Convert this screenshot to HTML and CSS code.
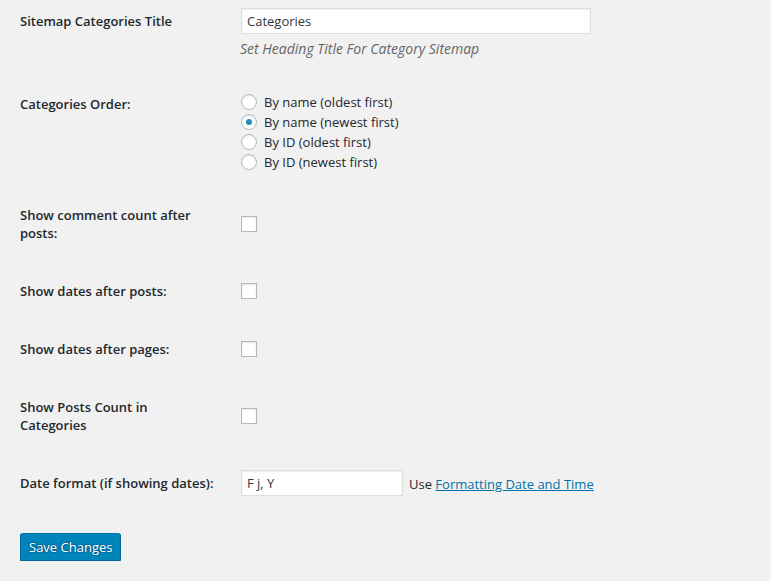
FILE: index.html
```html
<!DOCTYPE html>
<html>
<head>
<meta charset="utf-8">
<link rel="stylesheet" href="styles.css">
</head>
<body>
<div class="wrap">
  <table class="form-table">
    <tr class="row-first">
      <th>Sitemap Categories Title</th>
      <td>
        <input type="text" class="text-wide" value="Categories">
        <p class="description">Set Heading Title For Category Sitemap</p>
      </td>
    </tr>
    <tr class="row-radios">
      <th>Categories Order:</th>
      <td>
        <label class="radio-line"><input type="radio" name="order"> By name (oldest first)</label>
        <label class="radio-line"><input type="radio" name="order" checked> By name (newest first)</label>
        <label class="radio-line"><input type="radio" name="order"> By ID (oldest first)</label>
        <label class="radio-line"><input type="radio" name="order"> By ID (newest first)</label>
      </td>
    </tr>
    <tr>
      <th>Show comment count after<br>posts:</th>
      <td><input type="checkbox"></td>
    </tr>
    <tr>
      <th>Show dates after posts:</th>
      <td><input type="checkbox"></td>
    </tr>
    <tr>
      <th>Show dates after pages:</th>
      <td><input type="checkbox"></td>
    </tr>
    <tr>
      <th>Show Posts Count in<br>Categories</th>
      <td><input type="checkbox"></td>
    </tr>
    <tr>
      <th>Date format (if showing dates):</th>
      <td>
        <div class="date-line">
          <input type="text" class="text-small" value="F j, Y">
          <span class="hint">Use <a href="#">Formatting Date and Time</a></span>
        </div>
      </td>
    </tr>
  </table>
  <p class="submit"><button type="button" class="button-primary">Save Changes</button></p>
</div>
</body>
</html>
```
FILE: styles.css
```css
html, body {
  margin: 0;
  padding: 0;
  background: #f1f1f1;
}
body {
  font-family: "Open Sans", "Noto Sans", sans-serif;
  font-size: 13px;
  line-height: 18px;
  color: #23282d;
}
.wrap {
  padding: 0 20px;
}
.form-table {
  border-collapse: collapse;
  border-spacing: 0;
}
.form-table th {
  width: 210px;
  box-sizing: border-box;
  text-align: left;
  vertical-align: top;
  font-weight: 600;
  padding: 20px 10px 20px 0;
  line-height: 18px;
}
.form-table td {
  padding: 15px 10px;
  vertical-align: middle;
  line-height: 18px;
}
.row-first th { padding-top: 12px; }
.row-first td { padding-top: 8px; padding-bottom: 17px; vertical-align: top; }
.row-radios td { padding-top: 17px; padding-bottom: 14px; vertical-align: top; }

input[type=text] {
  box-sizing: border-box;
  height: 26px;
  margin: 0 0 0 1px;
  padding: 0 5px;
  border: 1px solid #ddd;
  box-shadow: inset 0 1px 2px rgba(0,0,0,.07);
  background: #fff;
  color: #32373c;
  font-family: inherit;
  font-size: 13px;
  outline: none;
}
.text-wide { width: 350px; display: block; }
.text-small { width: 162px; }
.description {
  margin: 6px 0 0;
  font-style: italic;
  font-size: 14px;
  color: #666;
}
.radio-line {
  display: flex;
  align-items: center;
  height: 20px;
  gap: 7px;
}
input[type=radio], input[type=checkbox] {
  -webkit-appearance: none;
  appearance: none;
  box-sizing: border-box;
  width: 16px;
  height: 16px;
  margin: 0 0 0 1px;
  border: 1px solid #b4b9be;
  background: #fff;
  box-shadow: inset 0 1px 2px rgba(0,0,0,.1);
  display: inline-block;
  vertical-align: middle;
  position: relative;
}
input[type=radio] { border-radius: 50%; }
input[type=radio]:checked::before {
  content: "";
  position: absolute;
  left: 4px;
  top: 4px;
  width: 6px;
  height: 6px;
  border-radius: 50%;
  background: #1e8cbe;
}
input[type=checkbox] { display: block; }
.date-line {
  display: flex;
  align-items: center;
  gap: 6px;
}
.hint { padding-top: 2px; }
.hint a { color: #0073aa; text-decoration: underline; }
.submit { margin: 21px 0 0; }
.button-primary {
  box-sizing: border-box;
  height: 28px;
  width: 101px;
  padding: 0 8px 1px;
  white-space: nowrap;
  background: #0085ba;
  border: 1px solid;
  border-color: #0073aa #006799 #006799;
  border-radius: 3px;
  box-shadow: 0 1px 0 #006799;
  color: #fff;
  text-shadow: 0 -1px 1px #006799, 1px 0 1px #006799, 0 1px 1px #006799, -1px 0 1px #006799;
  font-family: inherit;
  font-size: 13px;
  line-height: 26px;
}
```
